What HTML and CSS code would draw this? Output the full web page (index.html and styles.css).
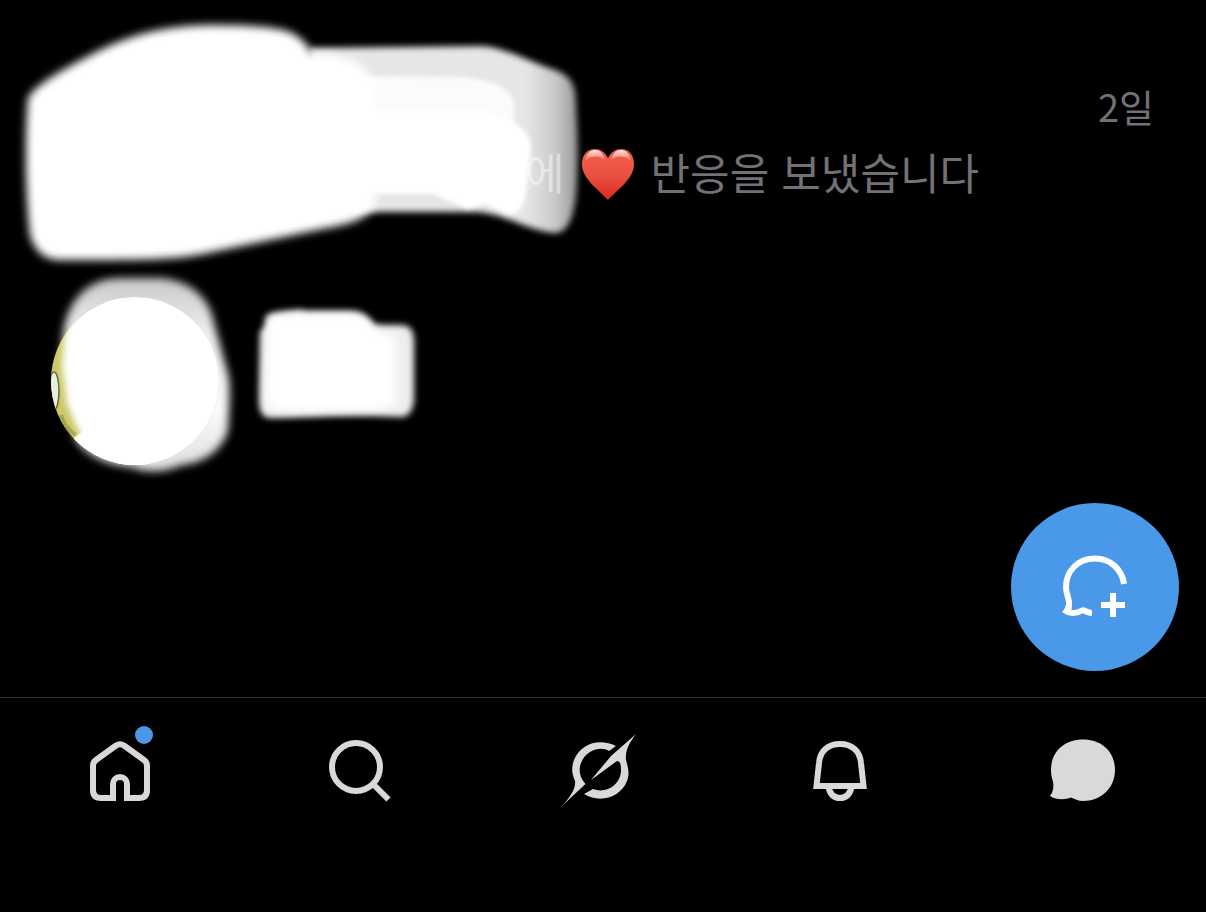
FILE: index.html
```html
<!DOCTYPE html>
<html lang="ko">
<head>
    <meta charset="UTF-8">
    <meta name="viewport" content="width=device-width, initial-scale=1.0">
    <title>쪽지</title>
    <link rel="stylesheet" href="styles.css">
</head>
<body>
    <!-- Conversation List -->
    <main class="messages">
        <article class="message">
            <time class="message-date">2일</time>
            <p class="message-text">
                <span>에</span>
                <svg class="heart" viewBox="0 -8 52 60" role="img" aria-label="하트">
                    <defs>
                        <linearGradient id="heartFill" x1="0" y1="0" x2="0" y2="1">
                            <stop offset="0" stop-color="#f0604f"/>
                            <stop offset="0.5" stop-color="#ec5143"/>
                            <stop offset="1" stop-color="#d92a1c"/>
                        </linearGradient>
                        <linearGradient id="heartShine" x1="0" y1="0" x2="0" y2="1">
                            <stop offset="0" stop-color="#fff" stop-opacity="0.85"/>
                            <stop offset="1" stop-color="#fff" stop-opacity="0"/>
                        </linearGradient>
                    </defs>
                    <path fill="url(#heartFill)" d="M26 9C23 3 18 0 13 0C5 0 0 6 0 15C0 30 16 40 26 51C36 40 52 30 52 15C52 6 47 0 39 0C34 0 29 3 26 9Z"/>
                    <path fill="url(#heartShine)" d="M3 13C4 5 8 1 13 1C18 1 21 4 23 11C17 6 8 6 3 13ZM49 13C48 5 44 1 39 1C34 1 31 4 29 11C35 6 44 6 49 13Z"/>
                </svg>
                <span>반응을 보냈습니다</span>
            </p>
            <svg class="cover" width="600" height="272" viewBox="0 0 600 272" aria-hidden="true">
                <defs>
                    <filter id="soft" x="-10%" y="-10%" width="120%" height="120%"><feGaussianBlur stdDeviation="4.500"/></filter>
                    <filter id="medium" x="-10%" y="-10%" width="120%" height="120%"><feGaussianBlur stdDeviation="3"/></filter>
                    <filter id="light" x="-10%" y="-10%" width="120%" height="120%"><feGaussianBlur stdDeviation="2"/></filter>
                    <linearGradient id="fade" gradientUnits="userSpaceOnUse" x1="370" y1="0" x2="578" y2="0">
                        <stop offset="0" stop-color="#fff" stop-opacity="0.9"/>
                        <stop offset="0.75" stop-color="#fff" stop-opacity="0.9"/>
                        <stop offset="0.88" stop-color="#fff" stop-opacity="0.8"/>
                        <stop offset="1" stop-color="#fff" stop-opacity="0.6"/>
                    </linearGradient>
                </defs>
                <path filter="url(#medium)" fill="url(#fade)" d="M310 48L480 46C502 46 530 62 555 70C574 77 576 88 576 108C578 140 578 165 576 196C573 218 568 234 553 233C530 231 500 212 475 212H310Z"/>
                <path filter="url(#soft)" fill="#fff" d="M28 98C36 83 70 66 98 51C130 36 158 26 210 25C250 25 280 27 292 33C305 40 309 48 312 54C345 53 364 62 374 82L376 205C365 220 350 224 322 229C280 238 240 246 208 253C175 260 145 260 60 260C43 260 34 249 30 235C25 190 25 135 28 98Z"/>
                <path filter="url(#light)" fill="#fff" fill-opacity="0.85" d="M360 76L460 77C490 80 513 86 514 105V170H360Z"/>
                <path filter="url(#light)" fill="#fff" d="M360 110H480C515 118 532 132 531 150L526 192C523 210 516 218 505 213L485 204L468 209L433 194H360Z"/>
            </svg>
        </article>

        <article class="message">
            <svg class="avatar-cover" width="440" height="216" viewBox="0 264 440 216" aria-hidden="true">
                <defs>
                    <clipPath id="avatar"><circle cx="135" cy="381" r="84"/></clipPath>
                    <filter id="blob" x="-10%" y="-10%" width="120%" height="120%"><feGaussianBlur stdDeviation="4"/></filter>
                    <filter id="edge" x="-10%" y="-10%" width="120%" height="120%"><feGaussianBlur stdDeviation="3"/></filter>
                    <linearGradient id="blobFill" gradientUnits="userSpaceOnUse" x1="0" y1="276" x2="0" y2="472">
                        <stop offset="0" stop-color="#c8c8c8"/>
                        <stop offset="0.3" stop-color="#eeeeee"/>
                        <stop offset="0.7" stop-color="#fafafa"/>
                        <stop offset="1" stop-color="#dcdcdc"/>
                    </linearGradient>
                </defs>
                <path filter="url(#blob)" fill="url(#blobFill)" d="M64 328C71 294 93 278 120 278H160C190 280 210 298 214 323L228 375C231 388 229 405 228 430C222 452 200 464 182 465C164 473 145 473 131 467C105 465 86 454 76 440L60 370Z"/>
                <g clip-path="url(#avatar)">
                    <rect x="51" y="297" width="168" height="168" fill="#cbc867"/>
                    <ellipse cx="54" cy="391" rx="5" ry="19" fill="#e7f0e1" stroke="#626744" stroke-width="1.5"/>
                    <path d="M61 415Q64 428 76 435" fill="none" stroke="#a5a74c" stroke-width="4"/>
                    <path d="M73 439L86 429L150 440V466H73Z" fill="#fffff0"/>
                    <path filter="url(#edge)" fill="#fff" d="M65 332L62 365L67 404L78 430L82 434L76 440L100 480H235V280H90Z"/>
                </g>
                <path filter="url(#edge)" fill="#ededed" d="M260 333C261 329 264 327 266 325V317C272 311 290 312 300 310L306 312H355C364 313 369 319 374 325H400C411 325 414 331 414 342V401C412 413 408 417 400 417C350 414 320 417 270 418C261 417 259 411 259 398Z"/>
                <path filter="url(#blob)" fill="#fff" d="M268 318C280 312 320 313 350 313C366 315 371 322 376 330L396 336V406C380 411 355 411 330 411H275C266 409 266 400 266 385Z"/>
            </svg>
        </article>
    </main>

    <!-- New Message Button -->
    <button class="compose" type="button" aria-label="새 쪽지">
        <svg width="100" height="100" viewBox="0 0 100 100">
            <path d="M79 47C77 32 65 21.500 50 21.500C33 21.500 21 34 21 50C21 58 25 62 24 68C24 71 23 73 21.500 74.500C27 77 33 76 38 73C42 75 44 76 47 76" fill="none" stroke="#fff" stroke-width="6" stroke-linejoin="bevel"/>
            <path d="M21 68C20 71 19 73 17 75C20 77 23 78 27 78L26 70Z" fill="#fff"/>
            <path d="M68 56V80M56 68H80" stroke="#fff" stroke-width="6"/>
        </svg>
    </button>

    <!-- Bottom Navigation -->
    <nav class="tab-bar">
        <a class="tab" href="#" aria-label="홈">
            <svg viewBox="0 10 100 100">
                <path d="M43 88V74A7 7 0 0 1 57 74V88" fill="none" stroke="#d9d9d9" stroke-width="6"/>
                <path d="M46 88H31Q23 88 23 80V56Q23 52 26 50L46 35.500Q50 33 54 35.500L74 50Q77 52 77 56V80Q77 88 69 88H54" fill="none" stroke="#d9d9d9" stroke-width="6"/>
                <circle cx="74" cy="25" r="9" fill="#4a99e9"/>
            </svg>
        </a>
        <a class="tab" href="#" aria-label="검색">
            <svg viewBox="0 0 100 100">
                <circle cx="46" cy="47" r="24" fill="none" stroke="#d9d9d9" stroke-width="6"/>
                <path d="M63 64L78.500 79.500" stroke="#d9d9d9" stroke-width="6"/>
            </svg>
        </a>
        <a class="tab" href="#" aria-label="Grok">
            <svg viewBox="0 0 100 100" fill="#d9d9d9">
                <path d="M66 26C50 18 31 23 24 40C21 48 22 54 25 61C26 69 20 77 12 86L35.500 64C25 53 30 38 40 32C47 28 54 28 59 31Z"/>
                <path d="M86 14L61 36L41 60L67 41C70 41 71 44 71 50C71 65 56 74 43 69L34 74C50 84 71 77 77 61C80 54 78 47 76 40C75 31 79 23 86 14Z"/>
            </svg>
        </a>
        <a class="tab" href="#" aria-label="알림">
            <svg viewBox="0 0 100 100" fill="none" stroke="#d9d9d9" stroke-width="6">
                <path d="M26.500 66L29 43C30 31 38 24 50 24S70 31 71 43L73.500 66Z"/>
                <path d="M38.500 67C40 74 44 78 50 78S60 74 61.500 67"/>
            </svg>
        </a>
        <a class="tab" href="#" aria-label="쪽지">
            <svg viewBox="0 0 100 100">
                <path d="M53 19.500C72 19.500 85 32 85 50C85 68 71 81 53 81C48 81 45 79 41 77.500C35 80 26 80 20 76C23 72 24 67 23 62C22 58 21 55 21 50C21 32 34 19.500 53 19.500Z" fill="#d9d9d9"/>
            </svg>
        </a>
    </nav>
</body>
</html>
```
FILE: styles.css
```css
/* --- GENERAL STYLING --- */
* {
    box-sizing: border-box;
}

body {
    font-family: "Noto Sans CJK KR", sans-serif;
    display: flex;
    flex-direction: column;
    min-height: 100vh;
    margin: 0;
    background-color: #000;
    color: #717176;
    position: relative;
}

/* --- CONVERSATION LIST --- */
.messages {
    flex: 1;
}

.message {
    position: relative;
}

.message:first-child {
    min-height: 264px;
    padding: 74px 52px 0 525px;
}

.message-date {
    display: block;
    font-size: 38px;
    line-height: 64px;
    text-align: right;
}

.message-text {
    display: flex;
    align-items: center;
    gap: 17px;
    margin: 0;
    font-size: 43px;
    line-height: 66px;
    white-space: nowrap;
}

.heart {
    width: 52px;
    height: 60px;
}

.cover {
    position: absolute;
    top: 0;
    left: 0;
}

.avatar-cover {
    display: block;
}

/* --- NEW MESSAGE BUTTON --- */
.compose {
    position: absolute;
    right: 27px;
    bottom: 241px;
    display: flex;
    align-items: center;
    justify-content: center;
    width: 168px;
    height: 168px;
    padding: 0;
    border: none;
    border-radius: 50%;
    background: #4a99e9;
    cursor: pointer;
}

/* --- BOTTOM NAVIGATION --- */
.tab-bar {
    display: flex;
    height: 215px;
    padding: 22px 6px 0 0;
    border-top: 1px solid #2f3033;
}

.tab {
    flex: 1;
    display: flex;
    justify-content: center;
    align-items: flex-start;
}

.tab svg {
    width: 100px;
    height: 100px;
}
```
